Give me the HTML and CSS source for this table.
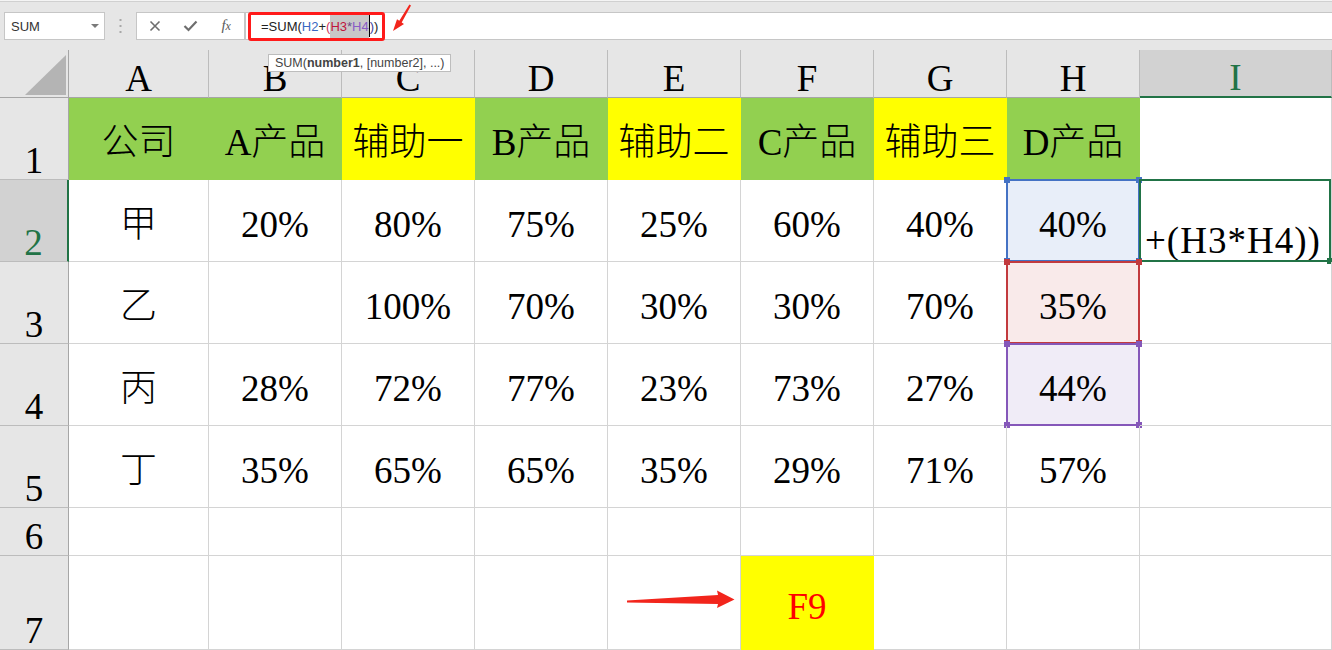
FILE: index.html
```html
<!DOCTYPE html>
<html lang="zh">
<head>
    <meta charset="UTF-8">
    <title>SUM</title>
    <link rel="stylesheet" href="styles.css">
</head>
<body>
    <div class="topbar">
      <div class="namebox">SUM<i class="caret"></i></div>
      <div class="grip">
        <svg width="3" height="16" viewBox="0 0 3 16"><rect x="0.5" y="1" width="2" height="2" fill="#a8a8a8"/><rect x="0.5" y="7" width="2" height="2" fill="#a8a8a8"/><rect x="0.5" y="13" width="2" height="2" fill="#a8a8a8"/></svg>
      </div>
      <div class="btns">
        <svg width="12" height="12" viewBox="0 0 12 12"><path d="M1.5 1.5 L10.5 10.5 M10.5 1.5 L1.5 10.5" stroke="#6e6e6e" stroke-width="1.6" fill="none"/></svg>
        <svg width="15" height="12" viewBox="0 0 15 12"><path d="M1.5 6 L5.5 10 L13.5 1.5" stroke="#6e6e6e" stroke-width="2.2" fill="none"/></svg>
        <span class="fx">f<small>x</small></span>
      </div>
      <div class="formula">
        <span>=SUM(</span><span class="k-blue">H2</span><span>+</span><span class="k-pink">(</span><span class="hl"><span class="k-red">H3</span><span class="k-mid">*</span><span class="k-purple">H4</span></span><i class="cursor"></i><span class="k-navy">)</span><span>)</span>
        <div class="mark"></div>
      </div>
    </div>

    <div class="sheet">
      <div class="c corner"><svg width="68" height="47" viewBox="0 0 68 47"><polygon points="25,45 66,5 66,45" fill="#b4b4b4"/></svg></div>
      <div class="c ch">A</div>
      <div class="c ch">B</div>
      <div class="c ch">C</div>
      <div class="c ch">D</div>
      <div class="c ch">E</div>
      <div class="c ch">F</div>
      <div class="c ch">G</div>
      <div class="c ch">H</div>
      <div class="c ch on">I</div>

      <div class="c rh">1</div>
      <div class="c g">公司</div>
      <div class="c g">A产品</div>
      <div class="c y">辅助一</div>
      <div class="c g">B产品</div>
      <div class="c y">辅助二</div>
      <div class="c g">C产品</div>
      <div class="c y">辅助三</div>
      <div class="c g">D产品</div>
      <div class="c"></div>

      <div class="c rh on">2</div>
      <div class="c">甲</div>
      <div class="c">20%</div>
      <div class="c">80%</div>
      <div class="c">75%</div>
      <div class="c">25%</div>
      <div class="c">60%</div>
      <div class="c">40%</div>
      <div class="c ref-blue"><span class="rng"><i class="tl"></i><i class="tr"></i><i class="bl"></i><i class="br"></i></span>40%</div>
      <div class="c edit"><span class="rng"><i class="br"></i></span>+(H3*H4))</div>

      <div class="c rh">3</div>
      <div class="c">乙</div>
      <div class="c"></div>
      <div class="c">100%</div>
      <div class="c">70%</div>
      <div class="c">30%</div>
      <div class="c">30%</div>
      <div class="c">70%</div>
      <div class="c ref-red"><span class="rng"><i class="tl"></i><i class="tr"></i><i class="bl"></i><i class="br"></i></span>35%</div>
      <div class="c"></div>

      <div class="c rh">4</div>
      <div class="c">丙</div>
      <div class="c">28%</div>
      <div class="c">72%</div>
      <div class="c">77%</div>
      <div class="c">23%</div>
      <div class="c">73%</div>
      <div class="c">27%</div>
      <div class="c ref-purple"><span class="rng"><i class="tl"></i><i class="tr"></i><i class="bl"></i><i class="br"></i></span>44%</div>
      <div class="c"></div>

      <div class="c rh">5</div>
      <div class="c">丁</div>
      <div class="c">35%</div>
      <div class="c">65%</div>
      <div class="c">65%</div>
      <div class="c">35%</div>
      <div class="c">29%</div>
      <div class="c">71%</div>
      <div class="c">57%</div>
      <div class="c"></div>

      <div class="c rh">6</div>
      <div class="c"></div>
      <div class="c"></div>
      <div class="c"></div>
      <div class="c"></div>
      <div class="c"></div>
      <div class="c"></div>
      <div class="c"></div>
      <div class="c"></div>
      <div class="c"></div>

      <div class="c rh">7</div>
      <div class="c"></div>
      <div class="c"></div>
      <div class="c"></div>
      <div class="c"></div>
      <div class="c"></div>
      <div class="c y key">F9</div>
      <div class="c"></div>
      <div class="c"></div>
      <div class="c"></div>
    </div>

    <!-- annotations over the sheet -->
    <div class="tip">SUM(<b>number1</b>, [number2], ...)</div>

    <svg class="arrow-top" width="28" height="34" viewBox="388 0 28 34">
      <polygon points="409.4,4.4 399.3,20.8 397,19.2 393,31 404,24 401.7,22.4 411,5.6" fill="#f2251c"/>
    </svg>

    <svg class="arrow-f9" width="120" height="30" viewBox="620 585 120 30">
      <polygon points="627,600.5 718,595 717,590.5 734.5,599.5 717,608 718,604 627,602.5" fill="#f2251c"/>
    </svg>
</body>
</html>
```

FILE: styles.css
```css
* {
  box-sizing: border-box;
}

body {
  margin: 0;
  width: 1332px;
  height: 650px;
  overflow: hidden;
  position: relative;
  background: #fff;
  font-family: "Liberation Sans", Arial, sans-serif;
}

/* formula bar */

.topbar {
  height: 50px;
  background: #e6e6e6;
  border-top: 1px solid #f4f4f4;
  box-shadow: inset 0 1px 0 #d0d0d0;
  display: flex;
  align-items: flex-start;
  padding-top: 11px;
}

.namebox {
  position: relative;
  margin-left: 4px;
  width: 101px;
  height: 28px;
  background: #fff;
  border: 1px solid #c6c6c6;
  display: flex;
  align-items: center;
  padding-left: 6px;
  font-size: 13px;
  color: #333;
}

.caret {
  position: absolute;
  right: 5px;
  top: 11px;
  border-left: 4px solid transparent;
  border-right: 4px solid transparent;
  border-top: 4px solid #7a7a7a;
}

.grip {
  width: 31px;
  display: flex;
  justify-content: center;
  padding-top: 6px;
}

.btns {
  width: 109px;
  height: 28px;
  background: #fff;
  border: 1px solid #c6c6c6;
  display: grid;
  grid-template-columns: repeat(3, 1fr);
  align-items: center;
  justify-items: center;
}

.fx {
  font-family: "Liberation Serif", serif;
  font-style: italic;
  font-size: 15px;
  color: #5a5a5a;
  margin-top: -2px;
}

.fx small {
  font-size: 12px;
}

.formula {
  position: relative;
  flex: 1;
  height: 28px;
  background: #fff;
  border-top: 1px solid #c6c6c6;
  border-bottom: 1px solid #c6c6c6;
  border-left: 1px solid #c6c6c6;
  display: flex;
  align-items: center;
  padding-left: 15px;
  font-size: 13px;
  color: #222;
}

.k-blue { color: #3a68c2; }
.k-pink { color: #d0375c; }
.k-red { color: #c0143c; }
.k-mid { color: #6b4b86; }
.k-purple { color: #8a5cc6; }
.k-navy { color: #3b3f9b; }

.hl {
  background: #c8c8c8;
  line-height: 23px;
}

.cursor {
  display: inline-block;
  width: 1px;
  height: 22px;
  background: #000;
}

.mark {
  position: absolute;
  left: 2px;
  top: -1px;
  width: 137px;
  height: 29px;
  border: 3px solid #ff1a1a;
  border-radius: 3px;
}

/* grid */

.sheet {
  display: grid;
  grid-template-columns: 69px 140px repeat(7, 133px) 1fr;
  grid-template-rows: 48px repeat(5, 82px) 48px 94px;
  font-family: "Liberation Serif", "Noto Sans CJK SC", serif;
  font-size: 37px;
  font-weight: 300;
  line-height: 1;
  color: #000;
}

.c {
  position: relative;
  border-right: 1px solid #d4d4d4;
  border-bottom: 1px solid #d4d4d4;
  display: flex;
  align-items: center;
  justify-content: center;
  padding-top: 8px;
  white-space: nowrap;
}

.corner {
  background: #e6e6e6;
  border-right-color: #a6a6a6;
  border-bottom-color: #a6a6a6;
  align-items: flex-start;
  justify-content: flex-start;
  padding-top: 0;
}

.ch {
  background: #e6e6e6;
  border-right-color: #bcbcbc;
  border-bottom-color: #a6a6a6;
  align-items: flex-end;
}

.rh {
  background: #e6e6e6;
  border-right-color: #a6a6a6;
  border-bottom-color: #bcbcbc;
  align-items: flex-end;
}

.ch.on {
  background: #d2d2d2;
  color: #217346;
  border-bottom: 2px solid #217346;
}

.rh.on {
  background: #d2d2d2;
  color: #217346;
  border-right: 2px solid #217346;
}

.g {
  background: #92d050;
  border-color: #92d050;
}

.y {
  background: #ffff00;
  border-color: #ffff00;
}

.key {
  color: #ff0000;
}

/* referenced ranges */

.rng {
  position: absolute;
  top: -1px;
  left: -1px;
  right: -1px;
  bottom: -1px;
  border: 2px solid currentColor;
}

.rng i {
  position: absolute;
  width: 6px;
  height: 6px;
  background: currentColor;
}

.rng .tl { top: -4px; left: -4px; }
.rng .tr { top: -4px; right: -4px; }
.rng .bl { bottom: -4px; left: -4px; }
.rng .br { bottom: -4px; right: -4px; }

.ref-blue {
  background: #e8eef9;
}

.ref-blue .rng {
  color: #4472c4;
}

.ref-red {
  background: #f9eaea;
}

.ref-red .rng {
  color: #c23a3e;
}

.ref-purple {
  background: #f0ecf7;
}

.ref-purple .rng {
  color: #8557b9;
}

.edit {
  justify-content: flex-start;
  align-items: flex-end;
  padding-left: 5px;
  padding-bottom: 2px;
  letter-spacing: 1px;
}

.edit .rng {
  color: #217346;
  right: 0;
}

/* overlays */

.tip {
  position: absolute;
  left: 268px;
  top: 54px;
  width: 183px;
  height: 18px;
  background: #fff;
  border: 1px solid #bdbdbd;
  padding: 1px 0 0 6px;
  font-size: 12.5px;
  color: #444;
  white-space: nowrap;
}

.arrow-top {
  position: absolute;
  left: 388px;
  top: 0;
}

.arrow-f9 {
  position: absolute;
  left: 620px;
  top: 585px;
}
```
